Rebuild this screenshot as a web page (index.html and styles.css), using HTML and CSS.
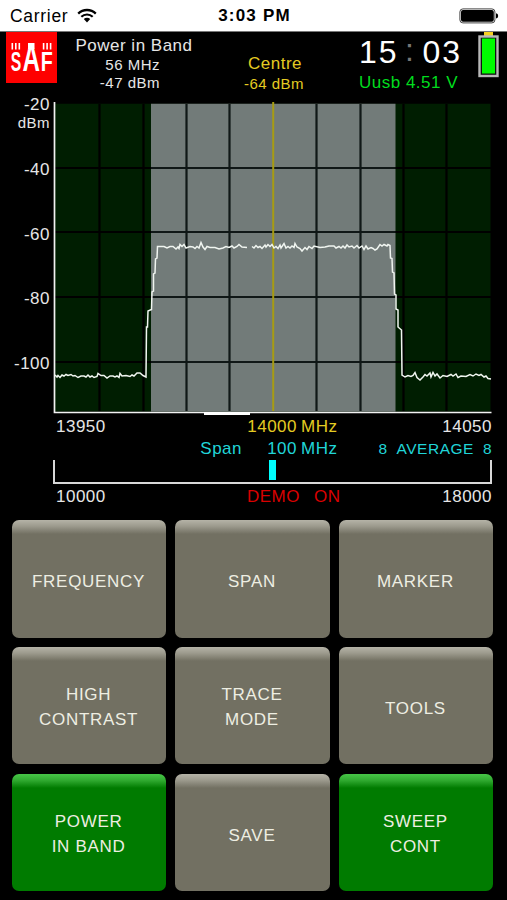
FILE: index.html
```html
<!DOCTYPE html>
<html lang="en">
<head>
  <meta charset="UTF-8">
  <meta name="viewport" content="width=device-width, initial-scale=1.0">
  <title>Spectrum Analyzer</title>
  <link rel="stylesheet" href="styles.css">
</head>

<body>
  <div class="status-bar">
    <div class="carrier">
      <span>Carrier</span>
      <svg class="wifi" width="20" height="15" viewBox="0 0 20 15">
        <path d="M1.2 5.6 A12.6 12.6 0 0 1 18.8 5.6" fill="none" stroke="#000" stroke-width="2.3"/>
        <path d="M4.3 8.8 A8.2 8.2 0 0 1 15.7 8.8" fill="none" stroke="#000" stroke-width="2.2"/>
        <path d="M6.8 11.1 A4.6 4.6 0 0 1 13.2 11.1 L10 14.4 Z" fill="#000"/>
      </svg>
    </div>
    <div class="clock">3:03 PM</div>
    <svg class="phone-battery" width="40" height="16" viewBox="0 0 40 16">
      <rect x="0.9" y="0.9" width="35" height="14" rx="3" fill="#fff" stroke="#444" stroke-width="1"/>
      <rect x="2" y="2" width="32.8" height="11.8" rx="2" fill="#000"/>
      <path d="M37 5.2 Q39.2 5.6 39.2 7.9 Q39.2 10.2 37 10.6 Z" fill="#000"/>
    </svg>
  </div>

  <div class="header">
    <svg class="logo" width="51" height="51" viewBox="0 0 51 51">
      <rect width="51" height="51" fill="#fe0000"/>
      <g fill="#fff">
        <rect x="5.5" y="11" width="1.6" height="6.5"/>
        <rect x="9" y="11" width="1.6" height="6.5"/>
        <rect x="12.5" y="11" width="1.6" height="6.5"/>
        <rect x="36.8" y="11" width="1.6" height="6.5"/>
        <rect x="40.3" y="11" width="1.6" height="6.5"/>
        <rect x="43.8" y="11" width="1.6" height="6.5"/>
        <rect x="22" y="11" width="6.5" height="6"/>
        <text class="logo-text" y="39"><tspan x="4.8" font-size="27" textLength="10.5" lengthAdjust="spacingAndGlyphs">S</tspan><tspan x="16.5" font-size="36" textLength="17.5" lengthAdjust="spacingAndGlyphs">A</tspan><tspan x="34.8" font-size="27" textLength="12" lengthAdjust="spacingAndGlyphs">F</tspan></text>
      </g>
    </svg>
    <div class="readout power">
      <div class="readout-title">Power in Band</div>
      <div>56 MHz</div>
      <div>-47 dBm</div>
    </div>
    <div class="readout centre">
      <div class="readout-title">Centre</div>
      <div>-64 dBm</div>
    </div>
    <div class="device">
      <div class="time"><span>15</span><span class="colon">:</span><span>03</span></div>
      <div class="usb">Uusb 4.51 V</div>
    </div>
    <svg class="device-battery" width="22" height="47" viewBox="0 0 22 47">
      <rect x="6" y="0" width="9" height="5" fill="#f5d020"/>
      <rect x="1.5" y="4.5" width="18" height="39.5" fill="#111" stroke="#b8b8b8" stroke-width="2.4"/>
      <rect x="4" y="6.5" width="13" height="35" fill="#00fe00"/>
    </svg>
  </div>

  <div class="chart">
    <div class="y-axis">
      <div>-20</div>
      <div class="unit">dBm</div>
      <div>-40</div>
      <div>-60</div>
      <div>-80</div>
      <div>-100</div>
    </div>
    <!-- viewBox uses screen coordinates -->
    <svg class="plot" width="443" height="316" viewBox="51 100 443 316">
      <rect x="55" y="103.5" width="435.5" height="308" fill="#001e01"/>
      <rect x="151" y="103.5" width="244.5" height="308" fill="#727b79"/>
      <g class="grid-dark">
        <path d="M55 102.5H491M55 168H491M55 232H491M55 297H491M55 362H491"/>
        <path d="M99.5 104V411M143.5 104V411M403.5 104V411M446.5 104V411"/>
      </g>
      <g class="grid-light">
        <path d="M151 168H395.5M151 232H395.5M151 297H395.5M151 362H395.5"/>
        <path d="M186.5 104V411M229.5 104V411M316.5 104V411M360.5 104V411"/>
      </g>
      <path class="centre-line" d="M273.2 102V411"/>
      <path class="axis" d="M54.5 102V412.5H491.5"/>
      <path d="M204 413.5H250" stroke="#fff" stroke-width="3"/>
      <polyline class="trace" points="55,375 57,377 58,375.5 60,377.5 62,375 64,376 66,374.5 68,375.5 71,374.5 73,376 75,375.5 78,377.5 81,376 84,376 86,377 88,375 90,377 92,376 94,377.5 97,376.5 98,373.5 101,375.5 104,375.5 107,378 110,376 113,376 115,377 117,376 119,377.5 120,373.5 122,376 126,375.5 130,376.5 132,375 134,376 137,373 140,373 143,375.5 146,377 146.5,327 147.5,327 148,311 151.5,309.5 152,292 153.5,291 153.5,274 155,273 155.5,259 157,258 157.5,246.5 164,246.5 167,248 170,246.5 173,246.5 176,249 178,247 179,248.5 180,244.5 182,246.5 184,244.5 186,248 190,246.5 193,247 195,248.5 197,246.5 199,248 201,242.5 203,247 205,249.5 207,246.5 210,247.5 215,247.5 219,249 223,248 226,246.5 229,247.5 232,246 234,248 237,246.5 239,244.5 242,247 247,247.5"/>
      <polyline class="trace" points="252,246.5 254,248 256,245.5 258,247.5 260,246.5 262,248.5 265,245 266,247 268,244.5 270,246.5 272,244.5 274,248 276,246.5 278,248.5 280,245 281,248 284,243.5 286,248 288,246.5 290,248 292,246 294,247.5 295,243.5 297,247 300,248.5 302,251 305,247.5 307,249.5 309,246.5 312,248.5 314,246 320,247.5 325,247 329,246 334,246 336,248 339,246.5 341,248 343,246 345,248 347,245 349,247 352,246 354,248 357,245.5 359,248 362,246 364,249.5 366,246 368,249 371,247.5 373,248.5 375,250 377,249 380,244.5 382,246 384,244.5 387,246 388,244.5 390,245.5 390.5,258 392,258.5 392.5,272 394,273 394.5,294 396,295 396,309 398,310 398,327 401.5,330 402,375 405,377 408,375.5 411,376.5 413,375.5 415,372.5 417,377.5 420,380 423,377 425,374.5 427,376 430,373 431,377 433,372.5 435,376 437,374 440,378 443,375.5 447,376.5 451,374.5 453,376 456,374 458,377.5 461,376 466,376.5 470,374.5 473,376 476,374 479,375.5 481,374.5 484,377 486,376 488,378.5 491,379"/>
    </svg>
  </div>

  <div class="info">
    <div class="info-row">
      <span>13950</span>
      <span class="number yellow">14000</span>
      <span class="unit-label yellow">MHz</span>
      <span>14050</span>
    </div>
    <div class="info-row cyan">
      <span class="span-label">Span</span>
      <span class="number">100</span>
      <span class="unit-label">MHz</span>
      <span class="average"><span>8</span><span>AVERAGE</span><span>8</span></span>
    </div>
    <div class="range"><div class="range-mark"></div></div>
    <div class="info-row bottom">
      <span>10000</span>
      <span class="demo"><span>DEMO</span><span>ON</span></span>
      <span>18000</span>
    </div>
  </div>

  <div class="buttons">
    <button>FREQUENCY</button>
    <button>SPAN</button>
    <button>MARKER</button>
    <button class="two-line">HIGH<br>CONTRAST</button>
    <button class="two-line">TRACE<br>MODE</button>
    <button>TOOLS</button>
    <button class="two-line active">POWER<br>IN BAND</button>
    <button>SAVE</button>
    <button class="two-line active">SWEEP<br>CONT</button>
  </div>
</body>
</html>
```
FILE: styles.css
```css
* {
  box-sizing: border-box;
}

body {
  margin: 0;
  height: 900px;
  overflow: hidden;
  background-color: #000;
  color: #e6e6e6;
  font-family: "Liberation Sans", Arial, sans-serif;
  font-size: 17px;
  letter-spacing: 0.5px;
  line-height: 20px;
}

svg {
  display: block;
}

.status-bar {
  display: grid;
  grid-template-columns: 1fr auto 1fr;
  align-items: center;
  height: 32px;
  padding: 0 8px 0 10px;
  background-color: #fff;
  border-bottom: 1px solid #777;
  color: #000;
}

.carrier {
  display: flex;
  align-items: center;
  gap: 9px;
  font-size: 17.5px;
  letter-spacing: 0.7px;
}

.clock {
  font-weight: bold;
  letter-spacing: 1.2px;
}

.phone-battery {
  justify-self: end;
}

.header {
  display: flex;
  height: 68px;
  padding-left: 6px;
}

.logo-text {
  font-weight: bold;
  letter-spacing: 0;
}

.readout {
  text-align: center;
  font-size: 15px;
}

.readout-title {
  font-size: 17px;
}

.power {
  width: 118px;
  margin-left: 18px;
  padding-top: 4px;
}

.power div:nth-child(2) {
  line-height: 17px;
}

.power div:nth-child(2),
.power div:nth-child(3) {
  text-align: right;
  padding-right: 33px;
}

.centre {
  width: 64px;
  margin-left: 49px;
  padding-top: 22px;
  color: #e4cb22;
}

.centre .readout-title {
  padding-left: 2px;
}

.centre div:last-child {
  line-height: 19px;
}

.device {
  width: 103px;
  margin-left: 53px;
}

.time {
  display: flex;
  justify-content: space-between;
  height: 41px;
  font-size: 32px;
  letter-spacing: 2px;
  line-height: 41px;
  color: #fff;
}

.colon {
  line-height: 37px;
  color: #777;
}

.usb {
  color: #00dc1e;
}

.device-battery {
  margin-left: 16px;
}

.chart {
  display: flex;
  height: 316px;
}

.y-axis {
  width: 51px;
  padding-right: 1px;
  text-align: right;
}

.y-axis div {
  height: 20px;
  margin-bottom: 44.5px;
}

.y-axis div:first-child {
  margin: -5px 0 0;
}

.y-axis .unit {
  height: 16px;
  margin-bottom: 29px;
  font-size: 15px;
  line-height: 15px;
}

.grid-dark,
.grid-light {
  fill: none;
  stroke: #000;
  stroke-width: 2.2;
}

.grid-light {
  stroke: #101817;
}

.centre-line {
  stroke: #a79c13;
  stroke-width: 2;
}

.axis {
  fill: none;
  stroke: #f2f2f2;
  stroke-width: 1.7;
}

.trace {
  fill: none;
  stroke: #f0f5f0;
  stroke-width: 1.5;
}

.info {
  height: 104px;
  padding-right: 15px;
}

.info-row {
  display: grid;
  grid-template-columns: 191px 50px 1fr auto;
  height: 22px;
  margin-left: 56px;
  line-height: 22px;
}

.unit-label {
  padding-left: 4px;
}

.number {
  text-align: right;
}

.yellow {
  color: #e4cb22;
}

.cyan {
  color: #20d5d8;
}

.span-label {
  padding-right: 5px;
  text-align: right;
}

.average {
  display: flex;
  gap: 9px;
  font-size: 15.5px;
}

.range {
  height: 24px;
  margin-left: 53px;
  border: 2px solid #d8d8d8;
  border-top: none;
}

.range-mark {
  width: 7px;
  height: 20px;
  margin-left: 214px;
  background-color: #00ffff;
}

.bottom {
  grid-template-columns: 191px 1fr auto;
  line-height: 25px;
}

.demo {
  display: flex;
  gap: 14px;
  color: #d90000;
}

.buttons {
  display: grid;
  grid-template-columns: repeat(3, 1fr);
  grid-auto-rows: 117.5px;
  gap: 9.3px;
  padding: 0 14px 0 12px;
}

button {
  padding: 6px 1px 0 0;
  border: none;
  border-radius: 7px;
  background: linear-gradient(#b5b3a7 0, #9d9b8e 6px, #727062 14px);
  color: #eeeee2;
  font-family: inherit;
  font-size: 17px;
  letter-spacing: 0.7px;
  line-height: 25px;
}

button.two-line {
  padding-top: 3px;
}

button.active {
  background: linear-gradient(#48c648 0, #32ac32 6px, #007b00 14px);
}
```
